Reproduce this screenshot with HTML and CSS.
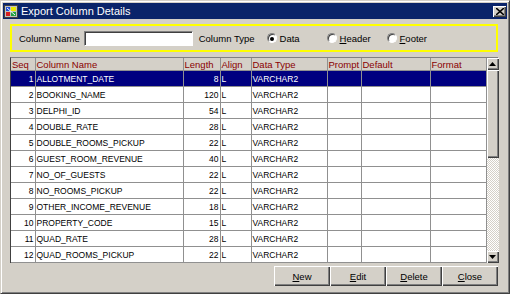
FILE: index.html
```html
<!DOCTYPE html>
<html lang="en">
<head>
    <meta charset="UTF-8">
    <title>Export Column Details</title>
    <link rel="stylesheet" href="styles.css">
</head>
<body>
    <div class="window">
        <div class="titlebar">
            <svg class="app-icon" width="14" height="13" viewBox="0 0 14 13">
                <rect x="0.5" y="0.5" width="13" height="12" fill="#c0c0c0" stroke="#404040"/>
                <rect x="2" y="2" width="4" height="4" fill="#1e4fd8"/>
                <rect x="7" y="2" width="5" height="4" fill="#e8e800"/>
                <rect x="2" y="7" width="4" height="4" fill="#d81e1e"/>
                <rect x="7" y="7" width="5" height="4" fill="#20a040"/>
                <path d="M3 3 L11 10" stroke="#ffffff" stroke-width="1"/>
            </svg>
            <span class="title">Export Column Details</span>
            <button class="close-btn">
                <svg width="8" height="7" viewBox="0 0 8 7"><path d="M0 0 L8 7 M8 0 L0 7" stroke="#000" stroke-width="1.6"/></svg>
            </button>
        </div>

        <div class="content">
            <div class="groupbox">
                <label class="field-label">Column Name</label>
                <input class="text-input" type="text">
                <span class="field-label type-label">Column Type</span>
                <span class="radio checked"></span><span class="radio-text">Data</span>
                <span class="radio"></span><span class="radio-text"><u>H</u>eader</span>
                <span class="radio"></span><span class="radio-text"><u>F</u>ooter</span>
            </div>

            <div class="grid-wrap">
                <table class="grid">
                    <colgroup>
                        <col style="width:24px">
                        <col style="width:148px">
                        <col style="width:37px">
                        <col style="width:31px">
                        <col style="width:76px">
                        <col style="width:34px">
                        <col style="width:69px">
                        <col style="width:56px">
                    </colgroup>
                    <thead>
                        <tr>
                            <th>Seq</th><th>Column Name</th><th>Length</th><th>Align</th>
                            <th>Data Type</th><th>Prompt</th><th>Default</th><th>Format</th>
                        </tr>
                    </thead>
                    <tbody id="rows"></tbody>
                </table>
                <div class="scrollbar">
                    <div class="sb-btn"><svg width="7" height="4" viewBox="0 0 7 4"><path d="M3.5 0 L7 4 L0 4 Z" fill="#000"/></svg></div>
                    <div class="sb-thumb"></div>
                    <div class="sb-track"></div>
                    <div class="sb-btn"><svg width="7" height="4" viewBox="0 0 7 4"><path d="M0 0 L7 0 L3.5 4 Z" fill="#000"/></svg></div>
                </div>
            </div>

            <div class="buttons">
                <button class="btn"><u>N</u>ew</button>
                <button class="btn"><u>E</u>dit</button>
                <button class="btn"><u>D</u>elete</button>
                <button class="btn"><u>C</u>lose</button>
            </div>
        </div>
    </div>

    <script>
        const columns = [
            ['ALLOTMENT_DATE', 8],
            ['BOOKING_NAME', 120],
            ['DELPHI_ID', 54],
            ['DOUBLE_RATE', 28],
            ['DOUBLE_ROOMS_PICKUP', 22],
            ['GUEST_ROOM_REVENUE', 40],
            ['NO_OF_GUESTS', 22],
            ['NO_ROOMS_PICKUP', 22],
            ['OTHER_INCOME_REVENUE', 18],
            ['PROPERTY_CODE', 15],
            ['QUAD_RATE', 28],
            ['QUAD_ROOMS_PICKUP', 22]
        ];

        const rowsBody = document.getElementById('rows');
        columns.forEach((col, index) => {
            const tr = document.createElement('tr');
            if (index === 0) tr.classList.add('selected');
            tr.innerHTML = `
                <td class="num">${index + 1}</td>
                <td>${col[0]}</td>
                <td class="num">${col[1]}</td>
                <td>L</td>
                <td>VARCHAR2</td>
                <td></td>
                <td></td>
                <td></td>
            `;
            rowsBody.appendChild(tr);
        });
    </script>
</body>
</html>
```

FILE: styles.css
```css
body {
    margin: 0;
    font-family: "Liberation Sans", Arial, sans-serif;
    font-size: 9.5px;
    color: #000;
}
.window {
    width: 510px;
    height: 294px;
    box-sizing: border-box;
    background-color: #d4d0c8;
    border: 1px solid #404040;
    border-top-color: #d4d0c8;
    border-left-color: #d4d0c8;
    box-shadow: inset 1px 1px 0 #ffffff, inset -1px -1px 0 #808080;
    padding: 2px;
    display: flex;
    flex-direction: column;
}
.titlebar {
    height: 16px;
    background-color: #0a246a;
    display: flex;
    align-items: center;
    padding: 0 1px 0 1px;
}
.app-icon {
    flex: none;
    margin-right: 3px;
}
.title {
    color: #ffffff;
    font-size: 11px;
    flex: 1;
}
.close-btn {
    width: 13px;
    height: 11px;
    padding: 0;
    margin: 0;
    background-color: #d4d0c8;
    border: none;
    box-shadow: inset 1px 1px 0 #ffffff, inset -1px -1px 0 #404040, inset -2px -2px 0 #808080;
    display: flex;
    align-items: center;
    justify-content: center;
}
.content {
    flex: 1;
    display: flex;
    flex-direction: column;
    padding: 5px 9px 0 7px;
}
.groupbox {
    height: 24px;
    border: 2px solid #ffff00;
    display: flex;
    align-items: center;
    padding-left: 7px;
}
.field-label {
    margin-right: 4px;
}
.text-input {
    width: 109px;
    height: 15px;
    box-sizing: border-box;
    margin: 0 6px 0 0;
    padding: 0;
    background: #ffffff;
    border: 1px solid;
    border-color: #808080 #ffffff #ffffff #808080;
    box-shadow: inset 1px 1px 0 #404040;
}
.type-label {
    margin-right: 12px;
}
.radio {
    width: 10px;
    height: 10px;
    box-sizing: border-box;
    border-radius: 50%;
    background: #ffffff;
    border: 1px solid;
    border-color: #808080 #ffffff #ffffff #808080;
    box-shadow: inset 1px 1px 0 #404040;
    position: relative;
    margin-right: 3px;
}
.radio.checked::after {
    content: "";
    position: absolute;
    left: 2.5px;
    top: 2.5px;
    width: 4px;
    height: 4px;
    border-radius: 50%;
    background: #000;
}
.radio-text {
    width: 47px;
}
.grid-wrap {
    margin-top: 5px;
    height: 205px;
    display: flex;
    border-left: 1px solid #404040;
    border-top: 1px solid #808080;
}
.grid {
    width: 475px;
    table-layout: fixed;
    border-collapse: collapse;
    align-self: flex-start;
    background: #ffffff;
}
.grid th {
    height: 12px;
    background-color: #d4d0c8;
    color: #8a0000;
    font-weight: normal;
    text-align: left;
    padding: 0 1px;
    border-right: 1px solid #909090;
    border-bottom: 1px solid #909090;
    white-space: nowrap;
    overflow: hidden;
}
.grid td {
    height: 15px;
    padding: 0 1px;
    font-size: 8.5px;
    border-right: 1px solid #909090;
    border-bottom: 1px solid #909090;
    white-space: nowrap;
    overflow: hidden;
}
.grid td.num {
    text-align: right;
}
.grid tr.selected td {
    background-color: #000080;
    color: #ffffff;
}
.scrollbar {
    width: 12px;
    flex: none;
    display: flex;
    flex-direction: column;
}
.sb-btn, .sb-thumb {
    background-color: #d4d0c8;
    box-shadow: inset 1px 1px 0 #ffffff, inset -1px -1px 0 #404040, inset -2px -2px 0 #808080;
}
.sb-btn {
    height: 12px;
    display: flex;
    align-items: center;
    justify-content: center;
}
.sb-thumb {
    height: 88px;
}
.sb-track {
    flex: 1;
    background: repeating-conic-gradient(#d4d0c8 0 25%, #ffffff 0 50%) 0 0 / 2px 2px;
}
.buttons {
    margin-top: 3px;
    display: flex;
    justify-content: flex-end;
}
.btn {
    width: 56px;
    height: 20px;
    margin: 0;
    padding: 0;
    font-family: "Liberation Sans", Arial, sans-serif;
    font-size: 9.5px;
    background-color: #d4d0c8;
    border: none;
    box-shadow: inset 1px 1px 0 #ffffff, inset -1px -1px 0 #404040, inset -2px -2px 0 #808080;
}
```
